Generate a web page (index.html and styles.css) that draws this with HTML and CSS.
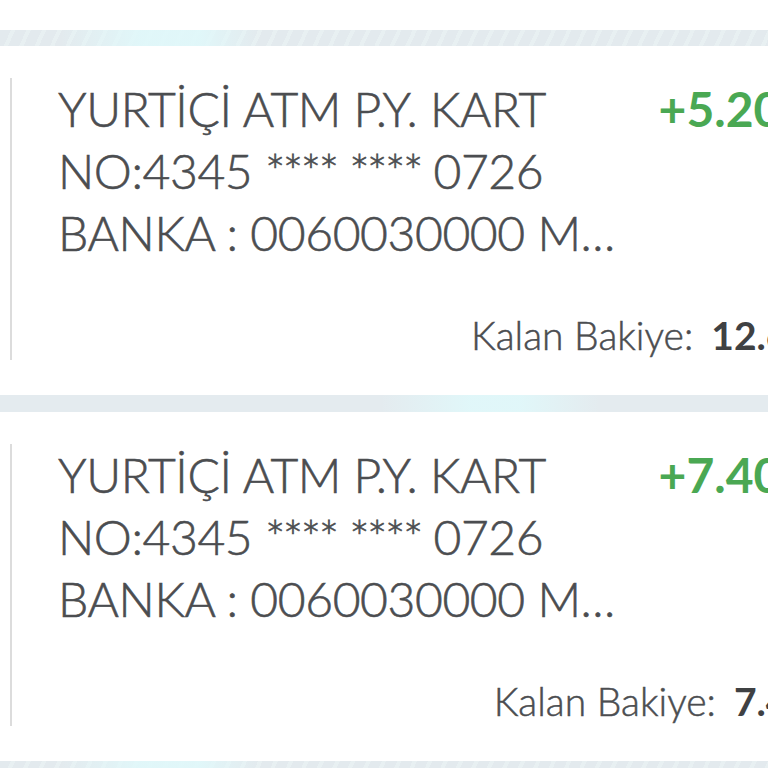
FILE: index.html
```html
<!DOCTYPE html>
<html lang="tr">
<head>
<meta charset="utf-8">
<title>Hesap Hareketleri</title>
<link rel="stylesheet" href="styles.css">
</head>
<body>
<div class="page">
  <div class="top"></div>
  <div class="band"></div>
  <div class="card">
    <div class="inner">
      <div class="row">
        <div class="desc">
          <div class="line">YURTİÇİ ATM P.Y. KART</div>
          <div class="line">NO:4345 <span class="mask">****</span> <span class="mask">****</span> 0726</div>
          <div class="line">BANKA : 0060030000 M…</div>
        </div>
        <div class="amount">+5.200,00 TL</div>
      </div>
      <div class="balance"><span class="label">Kalan Bakiye:</span><span class="value">12.600,00 TL</span></div>
    </div>
  </div>
  <div class="band band2"></div>
  <div class="card">
    <div class="inner">
      <div class="row">
        <div class="desc">
          <div class="line">YURTİÇİ ATM P.Y. KART</div>
          <div class="line">NO:4345 <span class="mask">****</span> <span class="mask">****</span> 0726</div>
          <div class="line">BANKA : 0060030000 M…</div>
        </div>
        <div class="amount">+7.400,00 TL</div>
      </div>
      <div class="balance"><span class="label">Kalan Bakiye:</span><span class="value">7.400,00 TL</span></div>
    </div>
  </div>
  <div class="band"></div>
</div>
</body>
</html>
```
FILE: styles.css
```css
html, body {
  margin: 0;
  padding: 0;
  background: #ffffff;
  overflow: hidden;
}
.page {
  width: 960px;
  font-family: "Lato", "Open Sans", "Liberation Sans", sans-serif;
  color: #4b4d50;
}
.top {
  height: 30px;
  background: #ffffff;
}
.band {
  height: 16px;
  background:
    linear-gradient(90deg, rgba(224,248,250,0) 60px, rgba(224,248,250,0.9) 140px, rgba(224,248,250,0.9) 200px, rgba(224,248,250,0) 260px),
    repeating-linear-gradient(115deg, #e3eaee 0 10px, #e8f0f2 10px 14px);
}
.band2 {
  height: 17px;
  background:
    linear-gradient(90deg, rgba(224,248,250,0) 380px, rgba(224,248,250,0.9) 470px, rgba(224,248,250,0.9) 520px, rgba(224,248,250,0) 600px),
    #e4ebef;
}
.card {
  height: 349px;
  background: #ffffff;
  padding: 32px 0 0 10px;
  box-sizing: border-box;
}
.inner {
  border-left: 2px solid #dcdcdc;
  height: 282px;
  padding-left: 46px;
  padding-right: 20px;
  display: flex;
  flex-direction: column;
  justify-content: space-between;
}
.row {
  display: flex;
  justify-content: space-between;
  align-items: flex-start;
}
.line {
  font-size: 48px;
  font-weight: 300;
  line-height: 62px;
  letter-spacing: -0.4px;
  -webkit-text-stroke: 0.6px #4b4d50;
  white-space: nowrap;
}
.mask {
  letter-spacing: -2.5px;
}
.amount {
  font-size: 48px;
  line-height: 62px;
  font-weight: 700;
  color: #4aa853;
  white-space: nowrap;
}
.balance {
  display: flex;
  justify-content: flex-end;
  align-items: baseline;
  gap: 18px;
  font-size: 39px;
  font-weight: 300;
  line-height: 50px;
  -webkit-text-stroke: 0.5px #4b4d50;
  white-space: nowrap;
}
.value {
  font-weight: 700;
  color: #3f4143;
  -webkit-text-stroke: 0;
}
```
